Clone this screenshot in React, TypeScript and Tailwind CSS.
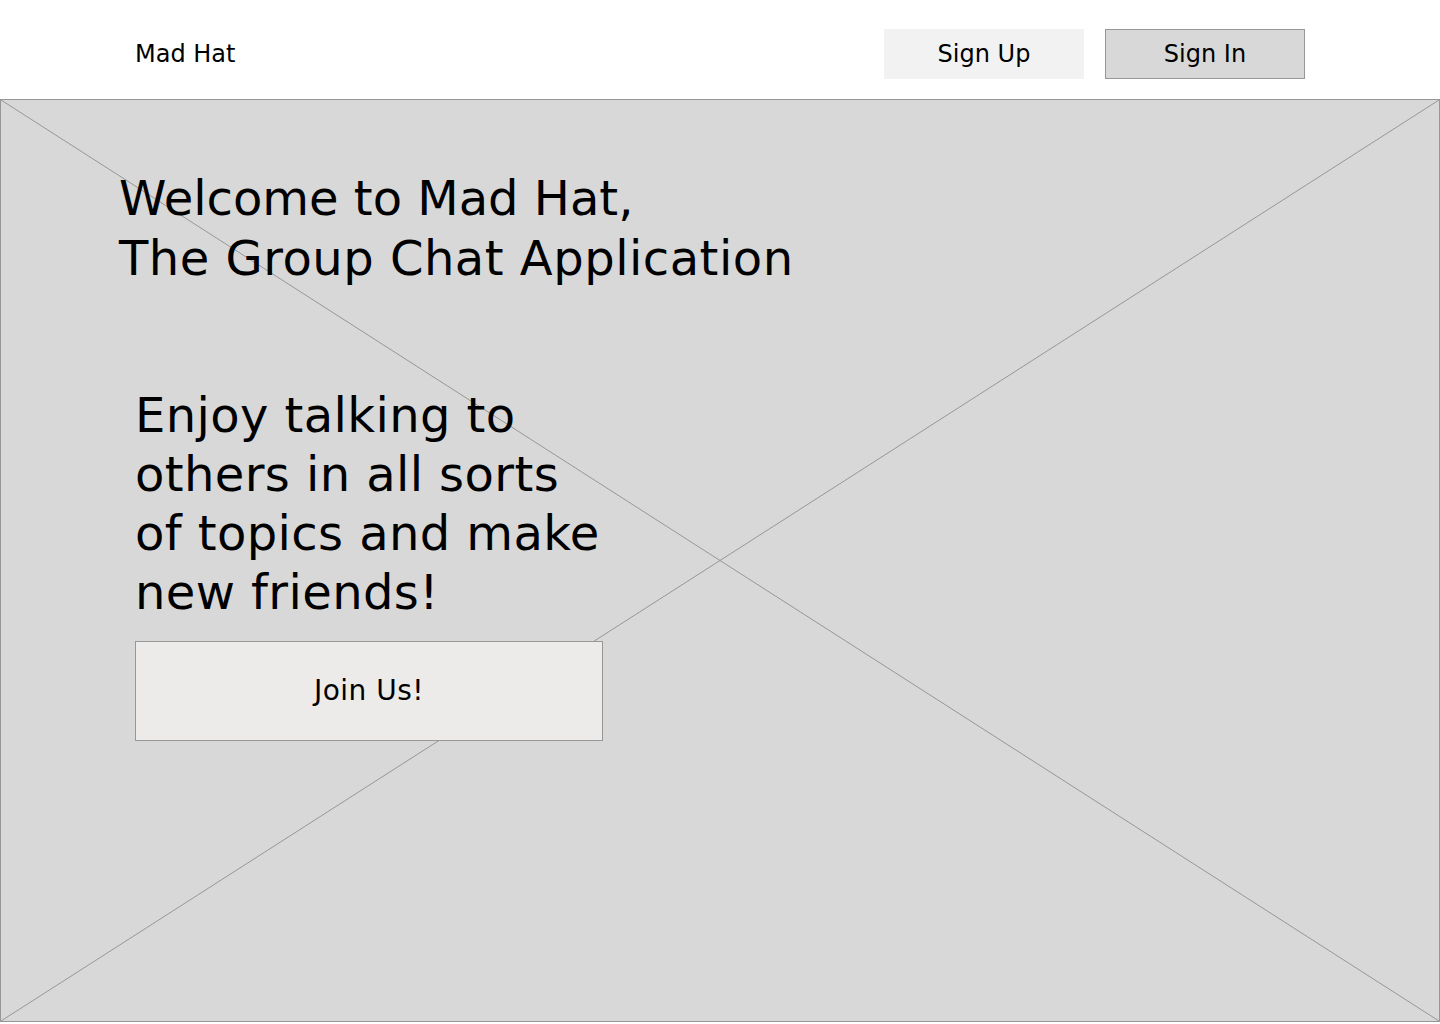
import React from 'react'

const font = "font-['DejaVu_Sans',Verdana,sans-serif]"

function Cross() {
  return (
    <svg
      className="absolute inset-0 h-full w-full pointer-events-none"
      viewBox="0 0 100 100"
      preserveAspectRatio="none"
    >
      <line x1="0" y1="0" x2="100" y2="100" stroke="#979797" strokeWidth="1" vectorEffect="non-scaling-stroke" />
      <line x1="100" y1="0" x2="0" y2="100" stroke="#979797" strokeWidth="1" vectorEffect="non-scaling-stroke" />
    </svg>
  )
}

export default function App() {
  return (
    <div className={`w-[1440px] h-[1024px] bg-white text-black ${font}`}>
      <header className="h-[99px] flex items-start justify-between pl-[135px] pr-[135px] pt-[29px]">
        <div className="h-[50px] flex items-center text-[24px] leading-[28px]">Mad Hat</div>
        <div className="flex gap-[21px]">
          <button className="w-[200px] h-[50px] bg-[#f2f2f2] text-[24px] leading-[28px] text-black">
            Sign Up
          </button>
          <button className="w-[200px] h-[50px] bg-[#d8d8d8] border border-[#979797] text-[24px] leading-[28px] text-black">
            Sign In
          </button>
        </div>
      </header>

      <section className="relative h-[923px] bg-[#d8d8d8] border border-[#979797]">
        <Cross />
        <div className="relative flex flex-col">
          <h1 className="ml-[118px] mt-[68px] text-[48px] leading-[60px] font-normal">
            Welcome to Mad Hat,
            <br />
            <span className="tracking-[0.5px]">The Group Chat Application</span>
          </h1>
          <p className="ml-[134px] mt-[98px] text-[48px] leading-[59px] tracking-[0.4px]">
            Enjoy talking to
            <br />
            others in all sorts
            <br />
            of topics and make
            <br />
            new friends!
          </p>
          <button className="ml-[134px] mt-[19px] w-[468px] h-[100px] bg-[#ecebe9] border border-[#979797] text-[28px] leading-[32px] tracking-[0.5px] text-black">
            Join Us!
          </button>
        </div>
      </section>
    </div>
  )
}
